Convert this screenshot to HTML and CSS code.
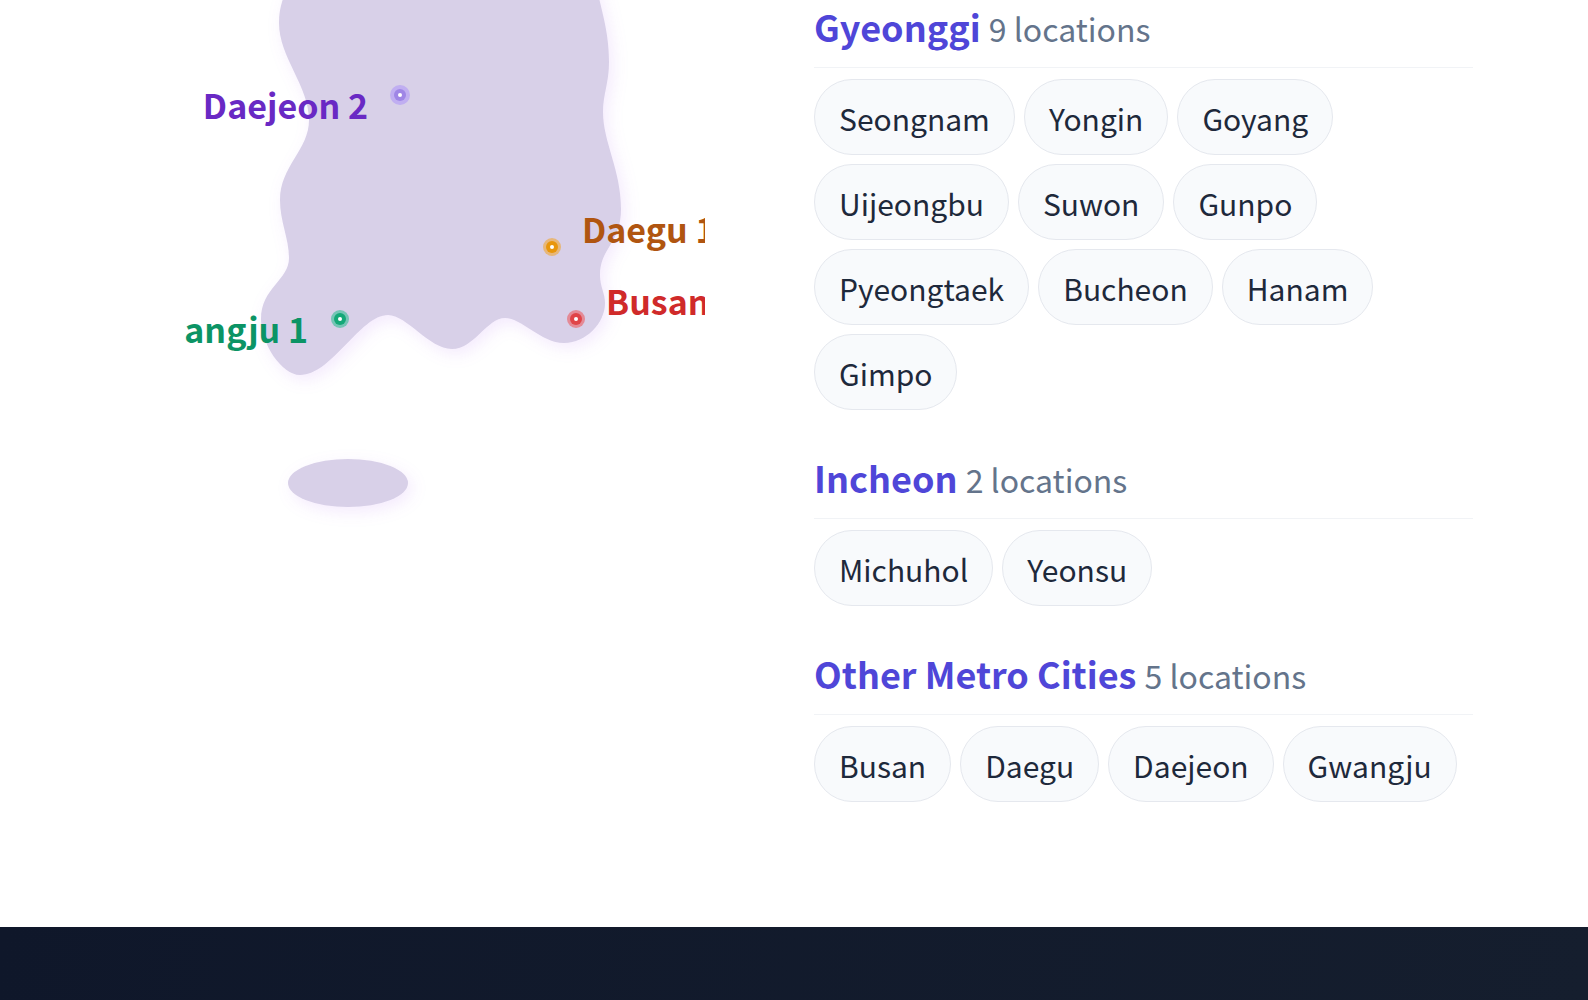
FILE: index.html
```html
<!DOCTYPE html>
<html lang="en">
<head>
<meta charset="utf-8">
<meta name="viewport" content="width=device-width, initial-scale=1">
<title>Locations</title>
<link rel="stylesheet" href="styles.css">
</head>
<body>
<main class="locations">
  <div class="map">
    <svg class="map-svg" viewBox="185 0 520 560" role="img" aria-label="Map of locations in Korea">
      <g class="land">
        <path d="M290 -20 C284 -4 279 6 279 23 C279 57 309 86 309 120 C309 150 280 166 280 200 C280 222 289 238 289 258 C289 280 261 288 261 319 C261 344 282 375 300 375 C332 375 360 315 388 315 C407 315 429 349 452 349 C474 349 487 318 505 318 C522 318 541 343 564 343 C586 343 605 323 605 303 C605 293 600 287 600 275 C600 248 621 243 621 209 C621 170 603 142 603 112 C603 94 609 83 609 62 C609 30 601 10 595 -20 Z"/>
        <ellipse cx="348" cy="483" rx="60" ry="24"/>
      </g>
      <g class="pin daejeon">
        <circle class="halo" cx="400" cy="95" r="10"/><circle class="dot" cx="400" cy="95" r="6"/><circle class="core" cx="400" cy="95" r="2"/>
        <text x="368" y="119" text-anchor="end">Daejeon 2</text>
      </g>
      <g class="pin daegu">
        <circle class="halo" cx="552" cy="247" r="9"/><circle class="dot" cx="552" cy="247" r="6"/><circle class="core" cx="552" cy="247" r="2"/>
        <text x="582" y="243">Daegu 1</text>
      </g>
      <g class="pin gwangju">
        <circle class="halo" cx="340" cy="319" r="9"/><circle class="dot" cx="340" cy="319" r="6"/><circle class="core" cx="340" cy="319" r="2"/>
        <text x="308" y="343" text-anchor="end">Gwangju 1</text>
      </g>
      <g class="pin busan">
        <circle class="halo" cx="576" cy="319" r="9"/><circle class="dot" cx="576" cy="319" r="6"/><circle class="core" cx="576" cy="319" r="2"/>
        <text x="606" y="315">Busan 1</text>
      </g>
    </svg>
  </div>
  <div class="regions">
    <section class="region">
      <h3 class="region-title">Gyeonggi <span class="count">9 locations</span></h3>
      <ul class="chips">
        <li class="chip">Seongnam</li><li class="chip">Yongin</li><li class="chip">Goyang</li>
        <li class="chip">Uijeongbu</li><li class="chip">Suwon</li><li class="chip">Gunpo</li>
        <li class="chip">Pyeongtaek</li><li class="chip">Bucheon</li><li class="chip">Hanam</li>
        <li class="chip">Gimpo</li>
      </ul>
    </section>
    <section class="region">
      <h3 class="region-title">Incheon <span class="count">2 locations</span></h3>
      <ul class="chips">
        <li class="chip">Michuhol</li><li class="chip">Yeonsu</li>
      </ul>
    </section>
    <section class="region">
      <h3 class="region-title">Other Metro Cities <span class="count">5 locations</span></h3>
      <ul class="chips">
        <li class="chip">Busan</li><li class="chip">Daegu</li><li class="chip">Daejeon</li><li class="chip">Gwangju</li>
      </ul>
    </section>
  </div>
</main>
<footer class="footer"></footer>
</body>
</html>
```
FILE: styles.css
```css
* { box-sizing: border-box; }
body {
  margin: 0;
  min-height: 100vh;
  display: flex;
  flex-direction: column;
  background: #fff;
  color: #1e293b;
  font-family: "Noto Sans CJK KR", "Noto Sans", sans-serif;
}
.locations {
  display: grid;
  grid-template-columns: minmax(0, 1fr) minmax(0, 1fr);
  gap: 40px;
  padding: 0 115px 125px;
}
.map {
  display: flex;
  justify-content: center;
  align-items: flex-start;
}
.map-svg {
  width: 100%;
  max-width: 520px;
  overflow: hidden;
}
.land {
  fill: #d8d0e8;
  filter: drop-shadow(4px 5px 8px rgba(147, 51, 234, 0.1));
}
.pin text { font-size: 34px; font-weight: 700; }
.halo { opacity: 0.5; }
.pin .core { fill: #fff; }
.daejeon circle { fill: #a78bfa; }
.daejeon .dot { fill: #9f86e6; }
.daejeon text { fill: #6929c4; }
.daegu circle { fill: #f59e0b; }
.daegu .dot { fill: #e8960c; }
.daegu text { fill: #b05510; }
.gwangju circle { fill: #10b981; }
.gwangju .dot { fill: #14a878; }
.gwangju text { fill: #0b9465; }
.busan circle { fill: #ef4444; }
.busan .dot { fill: #e04448; }
.busan text { fill: #d02a2a; }
.regions {
  display: flex;
  flex-direction: column;
  gap: 41px;
}
.region-title {
  margin: 0 0 11px;
  padding-bottom: 14px;
  border-bottom: 1px solid #f1f3f6;
  font-size: 36px;
  line-height: 53px;
  font-weight: 700;
  color: #4f46d8;
}
.count {
  font-size: 32px;
  line-height: 1;
  font-weight: 400;
  color: #64748b;
}
.chips {
  display: flex;
  flex-wrap: wrap;
  gap: 9px;
  margin: 0;
  padding: 0;
  list-style: none;
}
.chip {
  padding: 14px 24px 12px;
  border: 1px solid #e5e8ee;
  border-radius: 38px;
  background: #f8fafc;
  font-size: 30px;
  line-height: 48px;
}
.footer {
  flex: 1;
  background: linear-gradient(100deg, #0f172a, #151e2e);
}
```
